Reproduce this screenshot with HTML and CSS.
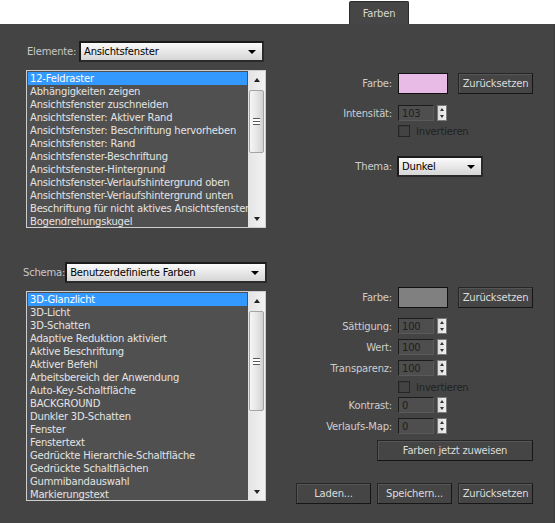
FILE: index.html
```html
<!DOCTYPE html>
<html lang="de">
<head>
<meta charset="utf-8">
<title>Farben</title>
<link rel="stylesheet" href="styles.css">
</head>
<body>
<div class="app">
  <div class="tabbar"><div class="tab">Farben</div></div>
  <div class="panel">
    <section class="sec sec1">
      <div class="left">
        <div class="selrow">
          <span class="lbl-l">Elemente:</span>
          <div class="select sel-el"><span>Ansichtsfenster</span><i class="caret"></i></div>
        </div>
        <div class="listbox lb1">
          <ul class="items">
            <li class="sel">12-Feldraster</li>
            <li>Abhängigkeiten zeigen</li>
            <li>Ansichtsfenster zuschneiden</li>
            <li>Ansichtsfenster: Aktiver Rand</li>
            <li>Ansichtsfenster: Beschriftung hervorheben</li>
            <li>Ansichtsfenster: Rand</li>
            <li>Ansichtsfenster-Beschriftung</li>
            <li>Ansichtsfenster-Hintergrund</li>
            <li>Ansichtsfenster-Verlaufshintergrund oben</li>
            <li>Ansichtsfenster-Verlaufshintergrund unten</li>
            <li>Beschriftung für nicht aktives Ansichtsfenster</li>
            <li>Bogendrehungskugel</li>
          </ul>
          <div class="sb">
            <div class="sb-btn"><i class="tri-up"></i></div>
            <div class="thumb"><i class="grip"></i></div>
            <div class="sb-fill"></div>
            <div class="sb-btn"><i class="tri-down"></i></div>
          </div>
        </div>
      </div>
      <div class="right">
        <div class="row r-farbe1">
          <span class="lbl">Farbe:</span>
          <div class="swatch pink"></div>
          <button class="btn btn-sm">Zurücksetzen</button>
        </div>
        <div class="row r-int">
          <span class="lbl">Intensität:</span>
          <div class="spinner"><span class="num">103</span></div>
          <div class="spin"><i class="tri-up s"></i><i class="tri-down s"></i></div>
        </div>
        <div class="row r-inv1">
          <span class="lbl"></span>
          <div class="check"></div>
          <span class="dis">Invertieren</span>
        </div>
        <div class="row r-thema">
          <span class="lbl">Thema:</span>
          <div class="select sel-thema"><span>Dunkel</span><i class="caret"></i></div>
        </div>
      </div>
    </section>

    <section class="sec sec2">
      <div class="left">
        <div class="selrow sr2">
          <span class="lbl-l">Schema:</span>
          <div class="select sel-sch"><span>Benutzerdefinierte Farben</span><i class="caret"></i></div>
        </div>
        <div class="listbox lb2">
          <ul class="items">
            <li class="sel">3D-Glanzlicht</li>
            <li>3D-Licht</li>
            <li>3D-Schatten</li>
            <li>Adaptive Reduktion aktiviert</li>
            <li>Aktive Beschriftung</li>
            <li>Aktiver Befehl</li>
            <li>Arbeitsbereich der Anwendung</li>
            <li>Auto-Key-Schaltfläche</li>
            <li>BACKGROUND</li>
            <li>Dunkler 3D-Schatten</li>
            <li>Fenster</li>
            <li>Fenstertext</li>
            <li>Gedrückte Hierarchie-Schaltfläche</li>
            <li>Gedrückte Schaltflächen</li>
            <li>Gummibandauswahl</li>
            <li>Markierungstext</li>
          </ul>
          <div class="sb">
            <div class="sb-btn"><i class="tri-up"></i></div>
            <div class="thumb"><i class="grip"></i></div>
            <div class="sb-fill"></div>
            <div class="sb-btn"><i class="tri-down"></i></div>
          </div>
        </div>
      </div>
      <div class="right">
        <div class="row r-farbe2">
          <span class="lbl">Farbe:</span>
          <div class="swatch grey"></div>
          <button class="btn btn-sm">Zurücksetzen</button>
        </div>
        <div class="row r-sp first">
          <span class="lbl">Sättigung:</span>
          <div class="spinner"><span class="num">100</span></div>
          <div class="spin"><i class="tri-up s"></i><i class="tri-down s"></i></div>
        </div>
        <div class="row r-sp">
          <span class="lbl">Wert:</span>
          <div class="spinner"><span class="num">100</span></div>
          <div class="spin"><i class="tri-up s"></i><i class="tri-down s"></i></div>
        </div>
        <div class="row r-sp">
          <span class="lbl">Transparenz:</span>
          <div class="spinner"><span class="num">100</span></div>
          <div class="spin"><i class="tri-up s"></i><i class="tri-down s"></i></div>
        </div>
        <div class="row r-inv2">
          <span class="lbl"></span>
          <div class="check"></div>
          <span class="dis">Invertieren</span>
        </div>
        <div class="row r-sp r-kon">
          <span class="lbl">Kontrast:</span>
          <div class="spinner"><span class="num">0</span></div>
          <div class="spin"><i class="tri-up s"></i><i class="tri-down s"></i></div>
        </div>
        <div class="row r-sp">
          <span class="lbl">Verlaufs-Map:</span>
          <div class="spinner"><span class="num">0</span></div>
          <div class="spin"><i class="tri-up s"></i><i class="tri-down s"></i></div>
        </div>
        <div class="row r-assign">
          <button class="btn btn-wide">Farben jetzt zuweisen</button>
        </div>
        <div class="row r-bottom">
          <button class="btn btn-sm">Laden...</button>
          <button class="btn btn-sm">Speichern...</button>
          <button class="btn btn-sm">Zurücksetzen</button>
        </div>
      </div>
    </section>
  </div>
</div>
</body>
</html>
```

FILE: styles.css
```css
* { box-sizing: border-box; }
html, body { margin: 0; padding: 0; background: #ffffff; }
body {
  width: 555px;
  height: 523px;
  overflow: hidden;
  font-family: "DejaVu Sans", Verdana, sans-serif;
  font-size: 10px;
  letter-spacing: -0.2px;
  color: #d2d2d2;
}
.app { width: 555px; height: 523px; display: flex; flex-direction: column; }

.tabbar {
  height: 24px;
  background: #ffffff;
  display: flex;
  align-items: flex-end;
  padding-left: 349px;
}
.tab {
  width: 60px;
  height: 23px;
  background: #464646;
  border: 1px solid #2b2b2b;
  border-bottom: none;
  border-radius: 2px 2px 0 0;
  color: #d6d6d6;
  display: flex;
  align-items: center;
  justify-content: center;
  padding-top: 1px;
}

.panel {
  flex: 1;
  background: #444444;
  padding-top: 17px;
  border-right: 1px solid #3a3a3a;
}
.sec { display: flex; align-items: flex-start; }
.sec2 { margin-top: 34px; }

.left { width: 240px; margin-left: 26px; display: flex; flex-direction: column; }
.selrow { height: 21px; display: flex; align-items: center; padding-left: 1px; }
.sr2 { margin-left: -4px; }
.lbl-l { color: #c8c8c8; }

.select {
  height: 21px;
  margin-left: auto;
  border: 2px solid #1b1b1b;
  border-right-color: #2a2a2a;
  border-bottom-color: #2a2a2a;
  background: linear-gradient(#fbfbfb, #e4e4e4 60%, #d6d6d6);
  color: #000;
  display: flex;
  align-items: center;
  padding: 0 6px 0 3px;
}
.select span { flex: 1; white-space: nowrap; }
.sel-el { width: 185px; margin-right: 2px; }
.sel-sch { width: 202px; margin-right: -1px; }
.sel-thema { width: 86px; margin-left: -1px; }
.caret {
  width: 0; height: 0;
  border-left: 4px solid transparent;
  border-right: 4px solid transparent;
  border-top: 4px solid #000;
}

.listbox {
  margin-top: 8px;
  border: 1px solid #cdcdcd;
  background: #505050;
  display: flex;
}
.lb1 { height: 158px; }
.lb2 { height: 210px; }
.items {
  list-style: none;
  margin: 0;
  padding: 1px;
  flex: 1;
  overflow: hidden;
  min-width: 0;
}
.items li {
  height: 13px;
  line-height: 13px;
  padding-left: 2px;
  white-space: nowrap;
  color: #e4e4e4;
}
.items li.sel { background: #3399ff; color: #ffffff; }

.sb {
  width: 17px;
  background: linear-gradient(90deg, #e4e4e4, #f2f2f2);
  display: flex;
  flex-direction: column;
  align-items: center;
}
.sb-btn { height: 17px; width: 17px; display: flex; align-items: center; justify-content: center; }
.sb-fill { flex: 1; }
.thumb {
  width: 15px;
  margin-top: 2px;
  border: 1px solid #a4a4a4;
  border-radius: 2px;
  background: linear-gradient(90deg, #f6f6f6, #e6e6e6 50%, #d2d2d2);
  display: flex;
  align-items: center;
  justify-content: center;
}
.lb1 .thumb { height: 63px; }
.lb2 .thumb { height: 100px; }
.grip {
  width: 7px;
  height: 7px;
  border-top: 1px solid #5a5a5a;
  border-bottom: 1px solid #5a5a5a;
  background: linear-gradient(#fff 0 2px, #5a5a5a 2px 3px, #fff 3px);
}
.tri-up, .tri-down {
  width: 0; height: 0;
  border-left: 3.5px solid transparent;
  border-right: 3.5px solid transparent;
}
.tri-up { border-bottom: 4px solid #222; }
.tri-down { border-top: 4px solid #222; }

.right { width: 253px; margin-left: 14px; display: flex; flex-direction: column; }
.row { display: flex; align-items: center; }
.lbl { width: 112px; margin-right: 6px; text-align: right; color: #cdcdcd; white-space: nowrap; }

.r-farbe1 { margin-top: 32px; height: 21px; }
.r-int { margin-top: 11px; height: 16px; }
.r-inv1 { margin-top: 4px; height: 12px; }
.r-thema { margin-top: 19px; height: 21px; }

.r-farbe2 { margin-top: 25px; height: 21px; }
.r-sp { margin-top: 5px; height: 16px; }
.r-sp.first { margin-top: 10px; }
.r-inv2 { margin-top: 5px; height: 12px; }
.r-sp.r-kon { margin-top: 4px; }
.r-assign { margin-top: 6px; height: 21px; justify-content: flex-end; }
.r-bottom { margin-top: 22px; height: 21px; gap: 6px; padding-left: 16px; }

.swatch { width: 50px; height: 21px; border: 1px solid #111; }
.pink { background: #e8bbe7; }
.grey { background: #808080; }

.btn {
  height: 21px;
  font: inherit;
  letter-spacing: inherit;
  color: #dcdcdc;
  background: #454545;
  border: 1px solid #262626;
  border-right-color: #161616;
  border-bottom-color: #161616;
  box-shadow: inset 1px 1px 0 #565656;
  padding: 0;
  display: flex;
  align-items: center;
  justify-content: center;
}
.btn-sm { width: 75px; }
.r-farbe1 .btn-sm, .r-farbe2 .btn-sm { margin-left: 10px; }
.btn-wide { width: 156px; }

.spinner {
  width: 36px;
  height: 16px;
  background: #4e4e4e;
  border: 1px solid #5a5a5a;
  border-top-color: #1c1c1c;
  border-left-color: #1c1c1c;
  display: flex;
  align-items: center;
  padding-left: 3px;
}
.num { color: #1e1e1e; }
.spin {
  width: 10px;
  height: 16px;
  margin-left: 3px;
  background: linear-gradient(90deg, #dcdcdc, #f0f0f0);
  border: 1px solid #7a7a7a;
  display: flex;
  flex-direction: column;
  align-items: center;
  justify-content: space-around;
}
.tri-up.s, .tri-down.s { border-left-width: 2.5px; border-right-width: 2.5px; }
.tri-up.s { border-bottom-width: 3px; border-bottom-color: #333; }
.tri-down.s { border-top-width: 3px; border-top-color: #333; }

.check {
  width: 12px;
  height: 12px;
  border: 1px solid #262626;
  background: #434343;
  box-shadow: inset 1px 1px 0 #3a3a3a;
}
.dis { margin-left: 6px; color: #222222; }
```
